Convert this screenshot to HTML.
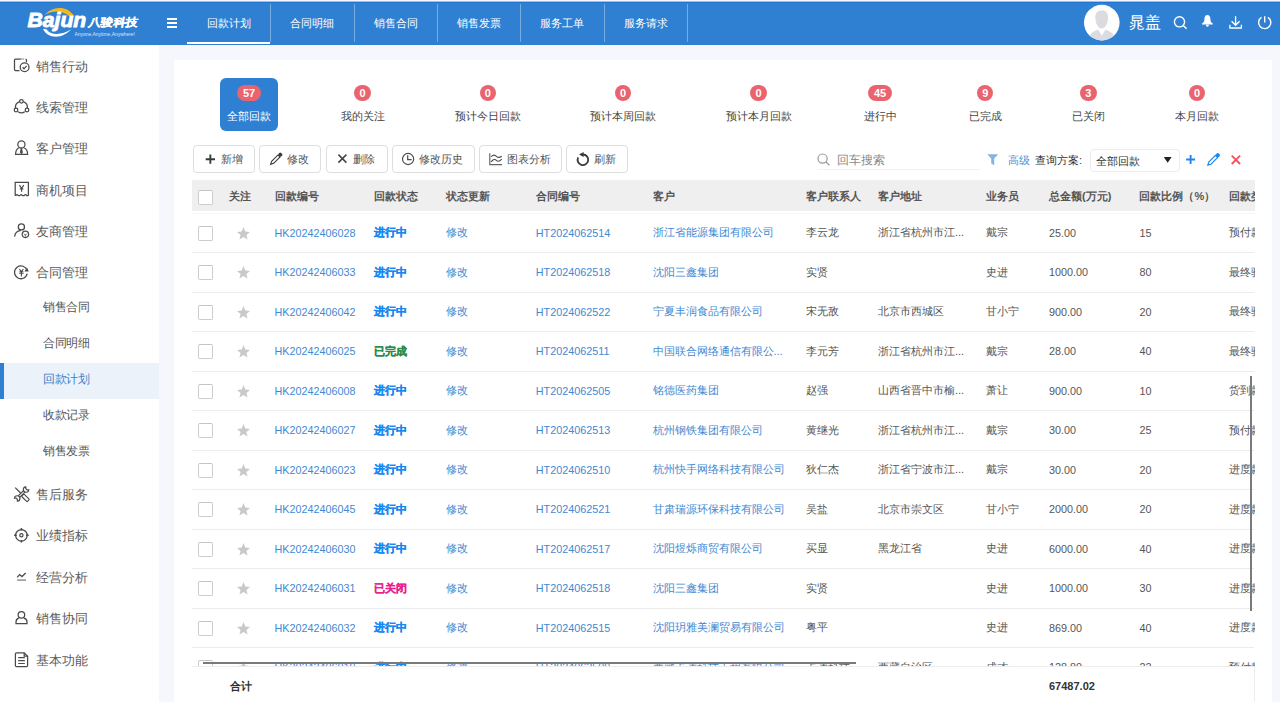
<!DOCTYPE html>
<html><head><meta charset="utf-8">
<style>
*{margin:0;padding:0;box-sizing:border-box}
html,body{width:1280px;height:702px;overflow:hidden;background:#f5f7fc;font-family:"Liberation Sans",sans-serif;color:#333}
.a{position:absolute;white-space:nowrap}
#hdr{position:absolute;left:0;top:1px;width:1280px;height:43.5px;background:#2f80d2;border-top:1px solid #a8bedb;box-shadow:inset 0 1px 0 #2176d3}
.tab{position:absolute;top:0;height:44px;line-height:44px;text-align:center;color:#fff;font-size:11px}
.sep{position:absolute;top:4px;width:1px;height:38px;background:rgba(255,255,255,0.35)}
#side{position:absolute;left:0;top:44.5px;width:159px;height:658px;background:#fff}
.si{position:absolute;left:36px;font-size:13px;color:#5c5c5c;line-height:16px}
.sub{position:absolute;left:43px;font-size:12px;letter-spacing:-0.5px;color:#5c5c5c;line-height:16px}
#card{position:absolute;left:174px;top:59.6px;width:1098px;height:643px;background:#fff}
.badge{position:absolute;height:16px;line-height:16px;border-radius:8px;background:#e9646f;color:#fff;font-size:11px;font-weight:bold;text-align:center}
.slab{position:absolute;font-size:11px;color:#444;line-height:16px;text-align:center}
.btn{position:absolute;top:145.3px;height:28.1px;border:1px solid #dedede;border-radius:4px;background:#fff;font-size:12px;color:#555;line-height:26px}
.th{position:absolute;top:188.3px;font-size:11px;font-weight:bold;color:#555;line-height:16px}
.cb{position:absolute;left:198px;width:15px;height:15px;border:1px solid #cdcdcd;border-top-color:#c4c4c4;border-radius:2px;background:#fff}
.rs{position:absolute;left:192px;width:1062px;height:1px;background:#ececec}
.td{position:absolute;font-size:11px;line-height:16px;color:#555}
.lk{color:#3f88d2}
</style></head><body>

<div id="hdr"></div>
<svg class="a" style="left:0;top:0" width="160" height="44" viewBox="0 0 160 44">
<path d="M45 14.8C50 7.5 66 3.5 73.8 15.6L68.8 16C63 10.8 54 9.6 45 14.8Z" fill="#f5b81c"/>
<text x="27.6" y="26.9" font-family="Liberation Sans" font-weight="bold" font-style="italic" font-size="20" fill="#fff" stroke="#fff" stroke-width="0.9" textLength="58.6" lengthAdjust="spacingAndGlyphs">Bajun</text>
<path d="M43 28.7C47 38.5 62 40 71.2 29.3C62 35.5 50 35.5 46.5 29.2Z" fill="#fff"/>
<text x="87.6" y="26" font-family="Liberation Sans" font-weight="bold" font-size="11" fill="#fff" stroke="#fff" stroke-width="0.25" textLength="49" lengthAdjust="spacingAndGlyphs" transform="translate(5 0) skewX(-10) translate(0 0)">八骏科技</text>
<text x="74.4" y="35.6" font-family="Liberation Sans" font-size="4.8" fill="#dbe7f7" textLength="60.6" lengthAdjust="spacingAndGlyphs">Anyone,Anytime,Anywhere!</text>
</svg>
<div class="a" style="left:166.5px;top:18px;width:10.5px;height:1.6px;background:#fff"></div>
<div class="a" style="left:166.5px;top:22.2px;width:10.5px;height:1.6px;background:#fff"></div>
<div class="a" style="left:166.5px;top:26.4px;width:10.5px;height:1.6px;background:#fff"></div>
<div class="tab" style="left:187px;width:83px;padding-top:1px">回款计划</div>
<div class="tab" style="left:270px;width:84px;padding-top:1px">合同明细</div>
<div class="tab" style="left:354px;width:83.5px;padding-top:1px">销售合同</div>
<div class="tab" style="left:437.5px;width:83.0px;padding-top:1px">销售发票</div>
<div class="tab" style="left:520.5px;width:83.89999999999998px;padding-top:1px">服务工单</div>
<div class="tab" style="left:604.4px;width:82.89999999999998px;padding-top:1px">服务请求</div>
<div class="sep" style="left:269.5px"></div>
<div class="sep" style="left:353.5px"></div>
<div class="sep" style="left:437.0px"></div>
<div class="sep" style="left:520.0px"></div>
<div class="sep" style="left:603.9px"></div>
<div class="sep" style="left:686.8px"></div>
<div class="a" style="left:187px;top:42px;width:83px;height:1.6px;background:#fff"></div>
<svg class="a" style="left:1083px;top:4px" width="38" height="38" viewBox="0 0 38 38">
<defs><clipPath id="av"><circle cx="18.8" cy="18.6" r="17.8"/></clipPath></defs>
<circle cx="18.8" cy="18.6" r="17.8" fill="#fff"/>
<g clip-path="url(#av)">
<path d="M18.7 6.4C23.2 6.4 25.1 9 25.1 13.5C25.1 19.5 22 24.6 18.7 24.6C15.4 24.6 12.3 19.5 12.3 13.5C12.3 9 14.2 6.4 18.7 6.4Z" fill="#dcdce0"/>
<path d="M4 40C5 30 9 28.2 15 25.4L18.8 31.4L22.6 25.4C28.6 28.2 32.6 30 33.6 40Z" fill="#dcdce0"/>
</g></svg>
<div class="a" style="left:1129px;top:13.5px;font-size:16px;line-height:18px;color:#fff">晁盖</div>
<svg class="a" style="left:1170px;top:10px" width="110" height="24" viewBox="1170 10 110 24" fill="none" stroke="#fff" stroke-width="1.4">
<circle cx="1179.5" cy="21.8" r="5.1"/><path d="M1183.3 25.6L1186.6 28.8"/>
<path d="M1207.4 14.9C1205.3 14.9 1204.4 16.8 1204.4 19.2C1204.4 21.4 1203.5 22.6 1202 23.5V24.5H1212.8V23.5C1211.3 22.6 1210.4 21.4 1210.4 19.2C1210.4 16.8 1209.5 14.9 1207.4 14.9Z" fill="#fff" stroke="none"/>
<ellipse cx="1207.4" cy="25.6" rx="1.5" ry="1.1" fill="#fff" stroke="none"/>
<path d="M1235.6 16.2V25.2M1231.6 21.2L1235.6 25.2L1239.6 21.2M1229.9 24.8V28H1241.4V24.8" stroke-width="1.35"/>
<path d="M1261.5 17.3A6.1 6.1 0 1 0 1267.9 17.3M1264.7 16.3V22.6"/>
</svg>
<div id="side"></div>
<div class="si" style="top:58.5px">销售行动</div>
<div class="si" style="top:99.5px">线索管理</div>
<div class="si" style="top:140.5px">客户管理</div>
<div class="si" style="top:182.5px">商机项目</div>
<div class="si" style="top:223.5px">友商管理</div>
<div class="si" style="top:264.5px">合同管理</div>
<div class="si" style="top:486.5px">售后服务</div>
<div class="si" style="top:528.0px">业绩指标</div>
<div class="si" style="top:569.5px">经营分析</div>
<div class="si" style="top:611.0px">销售协同</div>
<div class="si" style="top:652.5px">基本功能</div>
<div class="a" style="left:0;top:363px;width:159px;height:35.5px;background:#ecf2f9"></div>
<div class="a" style="left:0;top:363px;width:4px;height:35.5px;background:#2f7fd3"></div>
<div class="sub" style="top:298.5px;color:#555">销售合同</div>
<div class="sub" style="top:334.5px;color:#555">合同明细</div>
<div class="sub" style="top:370.5px;color:#3b82c9">回款计划</div>
<div class="sub" style="top:406.5px;color:#555">收款记录</div>
<div class="sub" style="top:442.5px;color:#555">销售发票</div>
<svg class="a" style="left:0;top:0" width="40" height="702" viewBox="0 0 40 702" fill="none" stroke="#4a4a4a" stroke-width="1.25">
<path d="M20.5 59H15.5Q14.5 59 14.5 60V69.5Q14.5 70.5 15.5 70.5H19.5M21 58.5V59.5M23 58.5V59.5M25.5 59Q26.5 59 26.5 60V62" /><circle cx="24.6" cy="67.3" r="4.4"/><path d="M22.6 67.3L24 68.8L26.6 65.8"/>
<path d="M19.6 101.6A6.2 6.2 0 0 0 15.5 108.3M27.3 108.3A6.2 6.2 0 0 0 23.3 101.6M18 111.7A6.2 6.2 0 0 0 24.8 111.7"/><circle cx="21.4" cy="101.3" r="1.8"/><circle cx="16" cy="110" r="1.8"/><circle cx="27" cy="110" r="1.8"/>
<circle cx="21.4" cy="144.4" r="3.6"/><path d="M18.8 147.8Q15.6 149.5 15.6 154.3H27.6Q27.6 149.5 24.2 147.8"/><path d="M21.4 148.2L20.6 152.3L21.4 153.2L22.2 152.3Z" fill="#555"/>
<path d="M15.2 195.2V182.3H28.4V195.2Q27.4 196.2 26.4 195.2Q25.4 194.2 24.4 195.2Q23.3 196.2 22.2 195.2Q21.2 194.2 20.2 195.2Q19.1 196.2 18 195.2Q17 194.2 16 195.2Q15.6 195.6 15.2 195.2Z"/><path d="M19.4 185.2L21.6 188.3L23.8 185.2M21.6 188.3V191.7M19.8 188.8H23.4" stroke-width="1.2"/>
<circle cx="21.4" cy="226.9" r="3.1"/><path d="M14.6 236.6Q15 231.2 20.8 230.3"/><circle cx="25.4" cy="234.3" r="3.2"/><path d="M24.2 233.8L25.4 235.2L26.6 233.8M25.4 235.2V236.6" stroke-width="0.9"/>
<path d="M27.1 270.6A6.4 6.4 0 1 0 27.2 273.6"/><path d="M27.8 270.8L26.9 268.9L25.6 270.9Z" fill="#555"/><path d="M19.4 269.2L21.4 271.5L23.4 269.2M21.4 271.5V276.6M19.2 273.2H23.6M19.4 271.7H23.4" stroke-width="1.1"/>
<g transform="translate(21.6 494) rotate(-45)"><path d="M-3.7 -1.05H3.7M-3.7 1.05H3.7"/><path d="M8.1 -2.1A2.75 2.75 0 1 0 8.1 2.1L6.8 1V-1Z" stroke-width="1.15"/><path d="M-8.1 2.1A2.75 2.75 0 1 0 -8.1 -2.1L-6.8 -1V1Z" stroke-width="1.15"/></g><g transform="translate(21.6 494) rotate(45)"><path d="M-9 0H-1.4" stroke-width="1.3"/><rect x="1.6" y="-1.7" width="7.8" height="3.4" rx="0.9" stroke-width="1.15"/></g>
<circle cx="21.4" cy="535.3" r="5.8"/><circle cx="21.4" cy="535.3" r="1.6"/><path d="M21.4 528V530.6M21.4 540V542.6M14.1 535.3H16.7M26.1 535.3H28.7" stroke-width="1.5"/>
<path d="M17.2 577.4L19.6 574.6L22 576.6L25.6 573" stroke-width="1.3"/><path d="M17.2 580.1H26" stroke-width="1.4" stroke="#888"/>
<circle cx="21.4" cy="614.8" r="3.3"/><path d="M18.8 618.2Q16 619 16 622V623.6H27V622Q27 619 24 618.2"/>
<path d="M16.5 652.8H24.2L27.6 656.2V665.4Q27.6 666.6 26.4 666.6H16.6Q15.4 666.6 15.4 665.4V654Q15.4 652.8 16.5 652.8Z"/><path d="M24.2 652.8V656.2H27.6"/><path d="M18.2 657.6H24.8M18.2 660.6H24.8M18.2 663.5H24.8" stroke-width="1.1"/>
</svg>
<div id="card"></div>
<div class="a" style="left:220px;top:77.5px;width:57.5px;height:53.5px;background:#2f7fd3;border-radius:6px"></div>
<div class="badge" style="left:237.25px;top:85px;width:23.5px">57</div>
<div class="slab" style="left:199px;width:100px;top:107.6px;color:#fff">全部回款</div>
<div class="badge" style="left:354.35px;top:85px;width:16.5px">0</div>
<div class="slab" style="left:312.6px;width:100px;top:107.6px;color:#444">我的关注</div>
<div class="badge" style="left:479.55px;top:85px;width:16.5px">0</div>
<div class="slab" style="left:437.8px;width:100px;top:107.6px;color:#444">预计今日回款</div>
<div class="badge" style="left:614.75px;top:85px;width:16.5px">0</div>
<div class="slab" style="left:573px;width:100px;top:107.6px;color:#444">预计本周回款</div>
<div class="badge" style="left:750.25px;top:85px;width:16.5px">0</div>
<div class="slab" style="left:708.5px;width:100px;top:107.6px;color:#444">预计本月回款</div>
<div class="badge" style="left:868.25px;top:85px;width:23.5px">45</div>
<div class="slab" style="left:830px;width:100px;top:107.6px;color:#444">进行中</div>
<div class="badge" style="left:976.95px;top:85px;width:16.5px">9</div>
<div class="slab" style="left:935.2px;width:100px;top:107.6px;color:#444">已完成</div>
<div class="badge" style="left:1080.05px;top:85px;width:16.5px">3</div>
<div class="slab" style="left:1038.3px;width:100px;top:107.6px;color:#444">已关闭</div>
<div class="badge" style="left:1188.75px;top:85px;width:16.5px">0</div>
<div class="slab" style="left:1147px;width:100px;top:107.6px;color:#444">本月回款</div>
<div class="btn" style="left:193.4px;width:62px"></div>
<div class="btn" style="left:259.4px;width:62px"></div>
<div class="btn" style="left:325.6px;width:62px"></div>
<div class="btn" style="left:391.6px;width:83.4px"></div>
<div class="btn" style="left:479px;width:83.4px"></div>
<div class="btn" style="left:566px;width:62.2px"></div>
<svg class="a" style="left:0;top:140px" width="640" height="40" viewBox="0 140 640 40" fill="none" stroke="#444" stroke-width="1.5">
<path d="M210.35 154.6V163.8M205.7 159.2H215" stroke-width="1.9" stroke="#3a3a3a"/>
<g transform="translate(270.4 164.6) rotate(-45)"><path d="M0.3 0L3.2 -1.45H12.2V1.45H3.2Z" stroke-width="1.1" stroke="#3a3a3a"/><rect x="12.4" y="-1.9" width="3.4" height="3.8" rx="1.3" fill="#3a3a3a" stroke="none"/></g>
<path d="M338.4 154.6L346.4 162.6M346.4 154.6L338.4 162.6"/>
<circle cx="408.1" cy="159" r="5.6" stroke-width="1.15" stroke="#4a4a4a"/><path d="M407.7 155.3V159.6H411.6" stroke-width="1.2" stroke="#4a4a4a"/>
<path d="M489.8 153.2V164.6H502" stroke-width="1.2" stroke="#666"/><path d="M491.2 156.6Q494.2 153.6 496.6 156.6Q498.6 158.4 501.8 156.2M491.2 161.8Q494.2 157.8 496.6 160.6Q498.6 162.4 501.8 159.2" stroke-width="1.1" stroke="#4a4a4a"/>
<path d="M578.2 157.4A5.3 5.3 0 1 0 583 154.5" stroke-width="1.8" stroke="#3a3a3a"/><path d="M579 154.5L583.6 152.1L583.6 156.9Z" fill="#3a3a3a" stroke="none"/>
</svg>
<div class="a" style="left:221px;top:151px;font-size:11px;line-height:16px;color:#555;text-align:left">新增</div>
<div class="a" style="left:287px;top:151px;font-size:11px;line-height:16px;color:#555;text-align:left">修改</div>
<div class="a" style="left:352.8px;top:151px;font-size:11px;line-height:16px;color:#555;text-align:left">删除</div>
<div class="a" style="left:419.4px;top:151px;font-size:11px;line-height:16px;color:#555;text-align:left">修改历史</div>
<div class="a" style="left:507px;top:151px;font-size:11px;line-height:16px;color:#555;text-align:left">图表分析</div>
<div class="a" style="left:593.7px;top:151px;font-size:11px;line-height:16px;color:#555;text-align:left">刷新</div>
<svg class="a" style="left:810px;top:148px" width="200" height="24" viewBox="810 148 200 24" fill="none" stroke="#999" stroke-width="1.2">
<circle cx="822.6" cy="158.6" r="4.6"/><path d="M826 162L829.6 165.4"/>
<path d="M987.2 154.2H998.2L994.2 158.6V165.2L991.2 163.6V158.6Z" fill="#82b5e6" stroke="none"/>
</svg>
<div class="a" style="left:836.5px;top:151.5px;font-size:12px;line-height:16px;color:#888">回车搜索</div>
<div class="a" style="left:817px;top:169px;width:163px;height:1px;background:#eef4fb"></div>
<div class="a" style="left:1008px;top:152px;font-size:11px;line-height:16px;color:#4a8fd5">高级</div>
<div class="a" style="left:1035px;top:151.5px;font-size:11px;line-height:16px;color:#333">查询方案:</div>
<div class="a" style="left:1089.5px;top:149.3px;width:90px;height:22.4px;border:1px solid #ececec;border-radius:4px;background:#fff"></div>
<div class="a" style="left:1095.5px;top:152.5px;font-size:11px;line-height:16px;color:#333">全部回款</div>
<svg class="a" style="left:1160px;top:148px" width="90" height="24" viewBox="1160 148 90 24">
<path d="M1163.8 157H1171.6L1167.7 162.8Z" fill="#222"/>
<path d="M1190.6 155V164M1186.1 159.5H1195.1" stroke="#1a86f0" stroke-width="1.9" fill="none"/>
<g transform="translate(1207.6 165.4) rotate(-45)"><path d="M0.3 0L3.2 -1.5H12.6V1.5H3.2Z" stroke-width="1.2" stroke="#1a86f0" fill="none"/><rect x="12.8" y="-2" width="3.6" height="4" rx="1.6" fill="#1a86f0"/></g>
<path d="M1231.7 155.6L1240.1 164M1240.1 155.6L1231.7 164" stroke="#f5525a" stroke-width="1.8" fill="none"/>
</svg>
<div class="a" style="left:192px;top:179.5px;width:1062.5px;height:31.3px;background:#efefef"></div>
<div class="a" style="left:192px;top:212.5px;width:1062.5px;height:1px;background:#f5f5f5"></div>
<div class="cb" style="top:190px"></div>
<div class="th" style="left:229px">关注</div>
<div class="a" style="left:0;top:0;width:1254.5px;height:702px;overflow:hidden">
<div class="th" style="left:274.5px">回款编号</div>
<div class="th" style="left:373.75px">回款状态</div>
<div class="th" style="left:445.5px">状态更新</div>
<div class="th" style="left:535.75px">合同编号</div>
<div class="th" style="left:652.5px">客户</div>
<div class="th" style="left:805.5px">客户联系人</div>
<div class="th" style="left:878px">客户地址</div>
<div class="th" style="left:985.75px">业务员</div>
<div class="th" style="left:1049px">总金额(万元)</div>
<div class="th" style="left:1139.4px">回款比例（%）</div>
<div class="th" style="left:1229.4px">回款类型</div>
</div>
<div class="a" style="left:0;top:213px;width:1254.5px;height:453.5px;overflow:hidden">
<div class="cb" style="top:12.95px"></div>
<svg class="a" style="left:235.8px;top:13.95px" width="15" height="14" viewBox="0 0 15 14"><path d="M7.5 0L9.3 4.6L14 4.9L10.4 8L11.6 12.6L7.5 10L3.4 12.6L4.6 8L1 4.9L5.7 4.6Z" fill="#c9c9c9"/></svg>
<div class="td lk" style="left:274.5px;top:11.95px;font-size:10.8px">HK20242406028</div>
<div class="td" style="left:373.75px;top:11.25px;color:#1787f2;font-weight:bold;-webkit-text-stroke:0.25px #1787f2">进行中</div>
<div class="td lk" style="left:445.5px;top:11.25px">修改</div>
<div class="td lk" style="left:535.75px;top:11.95px;font-size:10.8px">HT2024062514</div>
<div class="td lk" style="left:652.5px;top:11.25px">浙江省能源集团有限公司</div>
<div class="td" style="left:805.5px;top:11.25px">李云龙</div>
<div class="td" style="left:878px;top:11.25px">浙江省杭州市江...</div>
<div class="td" style="left:985.75px;top:11.25px">戴宗</div>
<div class="td" style="left:1049px;top:11.95px;font-size:10.8px">25.00</div>
<div class="td" style="left:1139.4px;top:11.95px;font-size:10.8px">15</div>
<div class="td" style="left:1229.4px;top:11.25px">预付款</div>
<div class="rs" style="top:39.0px"></div>
<div class="cb" style="top:52.45px"></div>
<svg class="a" style="left:235.8px;top:53.45px" width="15" height="14" viewBox="0 0 15 14"><path d="M7.5 0L9.3 4.6L14 4.9L10.4 8L11.6 12.6L7.5 10L3.4 12.6L4.6 8L1 4.9L5.7 4.6Z" fill="#c9c9c9"/></svg>
<div class="td lk" style="left:274.5px;top:51.45px;font-size:10.8px">HK20242406033</div>
<div class="td" style="left:373.75px;top:50.75px;color:#1787f2;font-weight:bold;-webkit-text-stroke:0.25px #1787f2">进行中</div>
<div class="td lk" style="left:445.5px;top:50.75px">修改</div>
<div class="td lk" style="left:535.75px;top:51.45px;font-size:10.8px">HT2024062518</div>
<div class="td lk" style="left:652.5px;top:50.75px">沈阳三鑫集团</div>
<div class="td" style="left:805.5px;top:50.75px">实贤</div>
<div class="td" style="left:985.75px;top:50.75px">史进</div>
<div class="td" style="left:1049px;top:51.45px;font-size:10.8px">1000.00</div>
<div class="td" style="left:1139.4px;top:51.45px;font-size:10.8px">80</div>
<div class="td" style="left:1229.4px;top:50.75px">最终验收款</div>
<div class="rs" style="top:78.5px"></div>
<div class="cb" style="top:91.95px"></div>
<svg class="a" style="left:235.8px;top:92.95px" width="15" height="14" viewBox="0 0 15 14"><path d="M7.5 0L9.3 4.6L14 4.9L10.4 8L11.6 12.6L7.5 10L3.4 12.6L4.6 8L1 4.9L5.7 4.6Z" fill="#c9c9c9"/></svg>
<div class="td lk" style="left:274.5px;top:90.95px;font-size:10.8px">HK20242406042</div>
<div class="td" style="left:373.75px;top:90.25px;color:#1787f2;font-weight:bold;-webkit-text-stroke:0.25px #1787f2">进行中</div>
<div class="td lk" style="left:445.5px;top:90.25px">修改</div>
<div class="td lk" style="left:535.75px;top:90.95px;font-size:10.8px">HT2024062522</div>
<div class="td lk" style="left:652.5px;top:90.25px">宁夏丰润食品有限公司</div>
<div class="td" style="left:805.5px;top:90.25px">宋无敌</div>
<div class="td" style="left:878px;top:90.25px">北京市西城区</div>
<div class="td" style="left:985.75px;top:90.25px">甘小宁</div>
<div class="td" style="left:1049px;top:90.95px;font-size:10.8px">900.00</div>
<div class="td" style="left:1139.4px;top:90.95px;font-size:10.8px">20</div>
<div class="td" style="left:1229.4px;top:90.25px">最终验收款</div>
<div class="rs" style="top:118.0px"></div>
<div class="cb" style="top:131.45px"></div>
<svg class="a" style="left:235.8px;top:132.45px" width="15" height="14" viewBox="0 0 15 14"><path d="M7.5 0L9.3 4.6L14 4.9L10.4 8L11.6 12.6L7.5 10L3.4 12.6L4.6 8L1 4.9L5.7 4.6Z" fill="#c9c9c9"/></svg>
<div class="td lk" style="left:274.5px;top:130.45px;font-size:10.8px">HK20242406025</div>
<div class="td" style="left:373.75px;top:129.75px;color:#2a8c4c;font-weight:bold;-webkit-text-stroke:0.25px #2a8c4c">已完成</div>
<div class="td lk" style="left:445.5px;top:129.75px">修改</div>
<div class="td lk" style="left:535.75px;top:130.45px;font-size:10.8px">HT2024062511</div>
<div class="td lk" style="left:652.5px;top:129.75px">中国联合网络通信有限公...</div>
<div class="td" style="left:805.5px;top:129.75px">李元芳</div>
<div class="td" style="left:878px;top:129.75px">浙江省杭州市江...</div>
<div class="td" style="left:985.75px;top:129.75px">戴宗</div>
<div class="td" style="left:1049px;top:130.45px;font-size:10.8px">28.00</div>
<div class="td" style="left:1139.4px;top:130.45px;font-size:10.8px">40</div>
<div class="td" style="left:1229.4px;top:129.75px">最终验收款</div>
<div class="rs" style="top:157.5px"></div>
<div class="cb" style="top:170.95px"></div>
<svg class="a" style="left:235.8px;top:171.95px" width="15" height="14" viewBox="0 0 15 14"><path d="M7.5 0L9.3 4.6L14 4.9L10.4 8L11.6 12.6L7.5 10L3.4 12.6L4.6 8L1 4.9L5.7 4.6Z" fill="#c9c9c9"/></svg>
<div class="td lk" style="left:274.5px;top:169.95px;font-size:10.8px">HK20242406008</div>
<div class="td" style="left:373.75px;top:169.25px;color:#1787f2;font-weight:bold;-webkit-text-stroke:0.25px #1787f2">进行中</div>
<div class="td lk" style="left:445.5px;top:169.25px">修改</div>
<div class="td lk" style="left:535.75px;top:169.95px;font-size:10.8px">HT2024062505</div>
<div class="td lk" style="left:652.5px;top:169.25px">铭德医药集团</div>
<div class="td" style="left:805.5px;top:169.25px">赵强</div>
<div class="td" style="left:878px;top:169.25px">山西省晋中市榆...</div>
<div class="td" style="left:985.75px;top:169.25px">萧让</div>
<div class="td" style="left:1049px;top:169.95px;font-size:10.8px">900.00</div>
<div class="td" style="left:1139.4px;top:169.95px;font-size:10.8px">10</div>
<div class="td" style="left:1229.4px;top:169.25px">货到款</div>
<div class="rs" style="top:197.0px"></div>
<div class="cb" style="top:210.45px"></div>
<svg class="a" style="left:235.8px;top:211.45px" width="15" height="14" viewBox="0 0 15 14"><path d="M7.5 0L9.3 4.6L14 4.9L10.4 8L11.6 12.6L7.5 10L3.4 12.6L4.6 8L1 4.9L5.7 4.6Z" fill="#c9c9c9"/></svg>
<div class="td lk" style="left:274.5px;top:209.45px;font-size:10.8px">HK20242406027</div>
<div class="td" style="left:373.75px;top:208.75px;color:#1787f2;font-weight:bold;-webkit-text-stroke:0.25px #1787f2">进行中</div>
<div class="td lk" style="left:445.5px;top:208.75px">修改</div>
<div class="td lk" style="left:535.75px;top:209.45px;font-size:10.8px">HT2024062513</div>
<div class="td lk" style="left:652.5px;top:208.75px">杭州钢铁集团有限公司</div>
<div class="td" style="left:805.5px;top:208.75px">黄继光</div>
<div class="td" style="left:878px;top:208.75px">浙江省杭州市江...</div>
<div class="td" style="left:985.75px;top:208.75px">戴宗</div>
<div class="td" style="left:1049px;top:209.45px;font-size:10.8px">30.00</div>
<div class="td" style="left:1139.4px;top:209.45px;font-size:10.8px">25</div>
<div class="td" style="left:1229.4px;top:208.75px">预付款</div>
<div class="rs" style="top:236.5px"></div>
<div class="cb" style="top:249.95px"></div>
<svg class="a" style="left:235.8px;top:250.95px" width="15" height="14" viewBox="0 0 15 14"><path d="M7.5 0L9.3 4.6L14 4.9L10.4 8L11.6 12.6L7.5 10L3.4 12.6L4.6 8L1 4.9L5.7 4.6Z" fill="#c9c9c9"/></svg>
<div class="td lk" style="left:274.5px;top:248.95px;font-size:10.8px">HK20242406023</div>
<div class="td" style="left:373.75px;top:248.25px;color:#1787f2;font-weight:bold;-webkit-text-stroke:0.25px #1787f2">进行中</div>
<div class="td lk" style="left:445.5px;top:248.25px">修改</div>
<div class="td lk" style="left:535.75px;top:248.95px;font-size:10.8px">HT2024062510</div>
<div class="td lk" style="left:652.5px;top:248.25px">杭州快手网络科技有限公司</div>
<div class="td" style="left:805.5px;top:248.25px">狄仁杰</div>
<div class="td" style="left:878px;top:248.25px">浙江省宁波市江...</div>
<div class="td" style="left:985.75px;top:248.25px">戴宗</div>
<div class="td" style="left:1049px;top:248.95px;font-size:10.8px">30.00</div>
<div class="td" style="left:1139.4px;top:248.95px;font-size:10.8px">20</div>
<div class="td" style="left:1229.4px;top:248.25px">进度款</div>
<div class="rs" style="top:276.0px"></div>
<div class="cb" style="top:289.45px"></div>
<svg class="a" style="left:235.8px;top:290.45px" width="15" height="14" viewBox="0 0 15 14"><path d="M7.5 0L9.3 4.6L14 4.9L10.4 8L11.6 12.6L7.5 10L3.4 12.6L4.6 8L1 4.9L5.7 4.6Z" fill="#c9c9c9"/></svg>
<div class="td lk" style="left:274.5px;top:288.45px;font-size:10.8px">HK20242406045</div>
<div class="td" style="left:373.75px;top:287.75px;color:#1787f2;font-weight:bold;-webkit-text-stroke:0.25px #1787f2">进行中</div>
<div class="td lk" style="left:445.5px;top:287.75px">修改</div>
<div class="td lk" style="left:535.75px;top:288.45px;font-size:10.8px">HT2024062521</div>
<div class="td lk" style="left:652.5px;top:287.75px">甘肃瑞源环保科技有限公司</div>
<div class="td" style="left:805.5px;top:287.75px">吴盐</div>
<div class="td" style="left:878px;top:287.75px">北京市崇文区</div>
<div class="td" style="left:985.75px;top:287.75px">甘小宁</div>
<div class="td" style="left:1049px;top:288.45px;font-size:10.8px">2000.00</div>
<div class="td" style="left:1139.4px;top:288.45px;font-size:10.8px">20</div>
<div class="td" style="left:1229.4px;top:287.75px">进度款</div>
<div class="rs" style="top:315.5px"></div>
<div class="cb" style="top:328.95px"></div>
<svg class="a" style="left:235.8px;top:329.95px" width="15" height="14" viewBox="0 0 15 14"><path d="M7.5 0L9.3 4.6L14 4.9L10.4 8L11.6 12.6L7.5 10L3.4 12.6L4.6 8L1 4.9L5.7 4.6Z" fill="#c9c9c9"/></svg>
<div class="td lk" style="left:274.5px;top:327.95px;font-size:10.8px">HK20242406030</div>
<div class="td" style="left:373.75px;top:327.25px;color:#1787f2;font-weight:bold;-webkit-text-stroke:0.25px #1787f2">进行中</div>
<div class="td lk" style="left:445.5px;top:327.25px">修改</div>
<div class="td lk" style="left:535.75px;top:327.95px;font-size:10.8px">HT2024062517</div>
<div class="td lk" style="left:652.5px;top:327.25px">沈阳煜烁商贸有限公司</div>
<div class="td" style="left:805.5px;top:327.25px">买显</div>
<div class="td" style="left:878px;top:327.25px">黑龙江省</div>
<div class="td" style="left:985.75px;top:327.25px">史进</div>
<div class="td" style="left:1049px;top:327.95px;font-size:10.8px">6000.00</div>
<div class="td" style="left:1139.4px;top:327.95px;font-size:10.8px">40</div>
<div class="td" style="left:1229.4px;top:327.25px">进度款</div>
<div class="rs" style="top:355.0px"></div>
<div class="cb" style="top:368.45px"></div>
<svg class="a" style="left:235.8px;top:369.45px" width="15" height="14" viewBox="0 0 15 14"><path d="M7.5 0L9.3 4.6L14 4.9L10.4 8L11.6 12.6L7.5 10L3.4 12.6L4.6 8L1 4.9L5.7 4.6Z" fill="#c9c9c9"/></svg>
<div class="td lk" style="left:274.5px;top:367.45px;font-size:10.8px">HK20242406031</div>
<div class="td" style="left:373.75px;top:366.75px;color:#ec1f8e;font-weight:bold;-webkit-text-stroke:0.25px #ec1f8e">已关闭</div>
<div class="td lk" style="left:445.5px;top:366.75px">修改</div>
<div class="td lk" style="left:535.75px;top:367.45px;font-size:10.8px">HT2024062518</div>
<div class="td lk" style="left:652.5px;top:366.75px">沈阳三鑫集团</div>
<div class="td" style="left:805.5px;top:366.75px">实贤</div>
<div class="td" style="left:985.75px;top:366.75px">史进</div>
<div class="td" style="left:1049px;top:367.45px;font-size:10.8px">1000.00</div>
<div class="td" style="left:1139.4px;top:367.45px;font-size:10.8px">30</div>
<div class="td" style="left:1229.4px;top:366.75px">进度款</div>
<div class="rs" style="top:394.5px"></div>
<div class="cb" style="top:407.95px"></div>
<svg class="a" style="left:235.8px;top:408.95px" width="15" height="14" viewBox="0 0 15 14"><path d="M7.5 0L9.3 4.6L14 4.9L10.4 8L11.6 12.6L7.5 10L3.4 12.6L4.6 8L1 4.9L5.7 4.6Z" fill="#c9c9c9"/></svg>
<div class="td lk" style="left:274.5px;top:406.95px;font-size:10.8px">HK20242406032</div>
<div class="td" style="left:373.75px;top:406.25px;color:#1787f2;font-weight:bold;-webkit-text-stroke:0.25px #1787f2">进行中</div>
<div class="td lk" style="left:445.5px;top:406.25px">修改</div>
<div class="td lk" style="left:535.75px;top:406.95px;font-size:10.8px">HT2024062515</div>
<div class="td lk" style="left:652.5px;top:406.25px">沈阳玥雅美澜贸易有限公司</div>
<div class="td" style="left:805.5px;top:406.25px">粤平</div>
<div class="td" style="left:985.75px;top:406.25px">史进</div>
<div class="td" style="left:1049px;top:406.95px;font-size:10.8px">869.00</div>
<div class="td" style="left:1139.4px;top:406.95px;font-size:10.8px">40</div>
<div class="td" style="left:1229.4px;top:406.25px">进度款</div>
<div class="rs" style="top:434.0px"></div>
<div class="cb" style="top:447.45px"></div>
<svg class="a" style="left:235.8px;top:448.45px" width="15" height="14" viewBox="0 0 15 14"><path d="M7.5 0L9.3 4.6L14 4.9L10.4 8L11.6 12.6L7.5 10L3.4 12.6L4.6 8L1 4.9L5.7 4.6Z" fill="#c9c9c9"/></svg>
<div class="td lk" style="left:274.5px;top:446.45px;font-size:10.8px">HK20242406019</div>
<div class="td" style="left:373.75px;top:445.75px;color:#1787f2;font-weight:bold;-webkit-text-stroke:0.25px #1787f2">进行中</div>
<div class="td lk" style="left:445.5px;top:445.75px">修改</div>
<div class="td lk" style="left:535.75px;top:446.45px;font-size:10.8px">HT2024062509</div>
<div class="td lk" style="left:652.5px;top:445.75px">西藏卡达科技工程有限公司</div>
<div class="td" style="left:805.5px;top:445.75px">卡达科技</div>
<div class="td" style="left:878px;top:445.75px">西藏自治区</div>
<div class="td" style="left:985.75px;top:445.75px">成才</div>
<div class="td" style="left:1049px;top:446.45px;font-size:10.8px">128.80</div>
<div class="td" style="left:1139.4px;top:446.45px;font-size:10.8px">22</div>
<div class="td" style="left:1229.4px;top:445.75px">预付款</div>
</div>
<div class="a" style="left:192px;top:666px;width:1062.5px;height:1px;background:#ececec"></div>
<div class="a" style="left:1254px;top:666px;width:1px;height:36px;background:#ececec"></div>
<div class="a" style="left:203px;top:662px;width:652.5px;height:2px;background:#7a7a7a"></div>
<div class="a" style="left:1250px;top:376px;width:2px;height:235px;background:#7a7a7a"></div>
<div class="a" style="left:229.5px;top:678px;font-size:11px;font-weight:bold;line-height:16px;color:#333">合计</div>
<div class="a" style="left:1049px;top:678px;font-size:11px;font-weight:bold;line-height:16px;color:#333">67487.02</div>
</body></html>
